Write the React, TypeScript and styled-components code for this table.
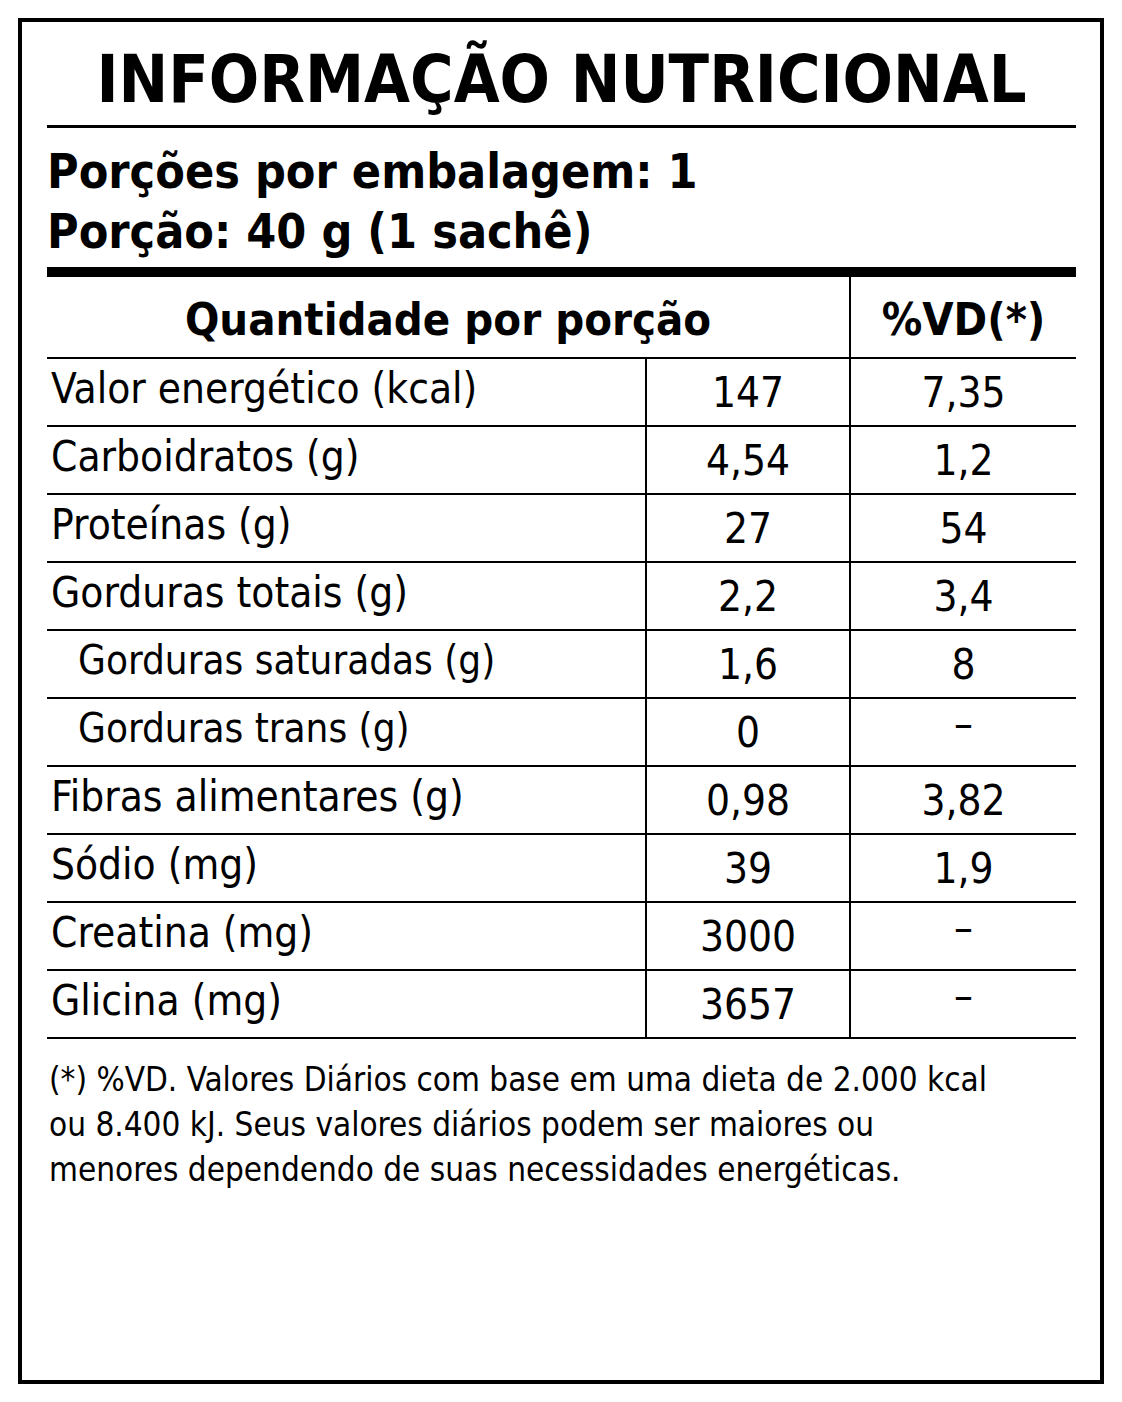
import React from "react";
import styled, { createGlobalStyle } from "styled-components";

const Global = createGlobalStyle`
  html, body { margin: 0; padding: 0; background: #ffffff; }
  body {
    font-family: "DejaVu Sans Condensed", "DejaVu Sans", sans-serif;
    font-stretch: semi-condensed;
    color: #000;
  }
`;

const Page = styled.div`
  padding: 18px;
  width: 1122px;
  box-sizing: border-box;
`;

const Label = styled.div`
  width: 1086px;
  height: 1366px;
  box-sizing: border-box;
  border: 4px solid #000;
  padding: 25px 24px 25px 25px;
  display: flex;
  flex-direction: column;
`;

const Title = styled.h1`
  margin: 0;
  font-size: 66px;
  line-height: 66px;
  font-weight: 700;
  text-align: center;
  padding-bottom: 12px;
  border-bottom: 3px solid #000;
`;

const Portion = styled.div`
  padding: 13px 0 6px;
  border-bottom: 10px solid #000;
  font-size: 48px;
  line-height: 60px;
  font-weight: 700;
`;

const Table = styled.div`
  display: grid;
  grid-template-columns: 598px 2px 202px 2px 225px;
`;

const HeadCell = styled.div<{ $span?: number }>`
  grid-column: span ${(p) => p.$span ?? 1};
  box-sizing: content-box;
  height: 76px;
  padding-top: 4px;
  display: flex;
  align-items: center;
  justify-content: center;
  font-size: 45px;
  font-weight: 700;
  border-bottom: 2px solid #000;
`;

const VLine = styled.div`
  background: #000;
`;

const NameCell = styled.div<{ $indent?: boolean }>`
  box-sizing: content-box;
  height: ${(p) => (p.$indent ? "60px" : "61px")};
  border-bottom: 2px solid #000;
  padding: ${(p) => (p.$indent ? "6px 0 0 31px" : "5px 0 0 4px")};
  font-size: ${(p) => (p.$indent ? "40px" : "42px")};
  line-height: normal;
  white-space: nowrap;
`;

const NumCell = styled.div`
  height: 66px;
  border-bottom: 2px solid #000;
  display: flex;
  align-items: center;
  justify-content: center;
  font-size: 42px;
`;

const DashCell = styled.div`
  box-sizing: content-box;
  height: 62px;
  padding-top: 4px;
  border-bottom: 2px solid #000;
  display: flex;
  align-items: flex-start;
  justify-content: center;
  font-size: 42px;
  line-height: 42px;
`;

const Footnote = styled.p`
  margin: 18px 0 0;
  padding-left: 2px;
  font-size: 33px;
  line-height: 45px;
  white-space: nowrap;
`;

type Row = { name: string; qty: string; vd: string; indent?: boolean };

const rows: Row[] = [
  { name: "Valor energético (kcal)", qty: "147", vd: "7,35" },
  { name: "Carboidratos (g)", qty: "4,54", vd: "1,2" },
  { name: "Proteínas (g)", qty: "27", vd: "54" },
  { name: "Gorduras totais (g)", qty: "2,2", vd: "3,4" },
  { name: "Gorduras saturadas (g)", qty: "1,6", vd: "8", indent: true },
  { name: "Gorduras trans (g)", qty: "0", vd: "–", indent: true },
  { name: "Fibras alimentares (g)", qty: "0,98", vd: "3,82" },
  { name: "Sódio (mg)", qty: "39", vd: "1,9" },
  { name: "Creatina (mg)", qty: "3000", vd: "–" },
  { name: "Glicina (mg)", qty: "3657", vd: "–" },
];

export default function App() {
  return (
    <Page>
      <Global />
      <Label>
        <Title>INFORMAÇÃO NUTRICIONAL</Title>
        <Portion>
          <div>Porções por embalagem: 1</div>
          <div>Porção: 40 g (1 sachê)</div>
        </Portion>
        <Table>
          <HeadCell $span={3}>Quantidade por porção</HeadCell>
          <VLine />
          <HeadCell>%VD(*)</HeadCell>
          {rows.map((r) => (
            <React.Fragment key={r.name}>
              <NameCell $indent={r.indent}>{r.name}</NameCell>
              <VLine />
              <NumCell>{r.qty}</NumCell>
              <VLine />
              {r.vd === "–" ? <DashCell>–</DashCell> : <NumCell>{r.vd}</NumCell>}
            </React.Fragment>
          ))}
        </Table>
        <Footnote>
          (*) %VD. Valores Diários com base em uma dieta de 2.000 kcal
          <br />
          ou 8.400 kJ. Seus valores diários podem ser maiores ou
          <br />
          menores dependendo de suas necessidades energéticas.
        </Footnote>
      </Label>
    </Page>
  );
}
